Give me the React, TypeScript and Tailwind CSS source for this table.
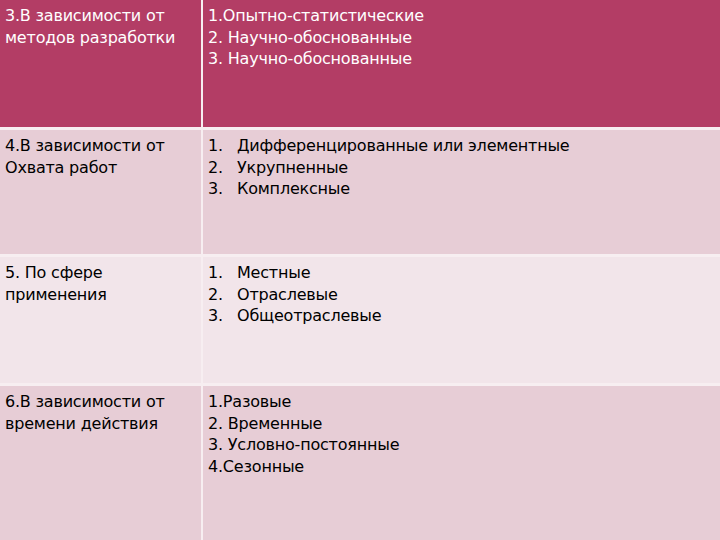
import * as React from "react";

const rows = [
  {
    head: ["3.В зависимости от", "методов разработки"],
    items: ["1.Опытно-статистические", "2. Научно-обоснованные", "3. Научно-обоснованные"],
    list: false,
    bg: "bg-[#b33d65]",
    text: "text-white",
  },
  {
    head: ["4.В зависимости от", "Охвата работ"],
    items: ["Дифференцированные или элементные", "Укрупненные", "Комплексные"],
    list: true,
    bg: "bg-[#e7cdd6]",
    text: "text-black",
  },
  {
    head: ["5. По сфере", "применения"],
    items: ["Местные", "Отраслевые", "Общеотраслевые"],
    list: true,
    bg: "bg-[#f2e5ea]",
    text: "text-black",
  },
  {
    head: ["6.В зависимости от", "времени действия"],
    items: ["1.Разовые", "2. Временные", "3. Условно-постоянные", "4.Сезонные"],
    list: false,
    bg: "bg-[#e7cdd6]",
    text: "text-black",
  },
];

export default function App() {
  return (
    <div
      className="w-[720px] h-[540px] bg-[#f7eef1] grid grid-cols-[201px_1fr] grid-rows-[127px_124px_126px_1fr] gap-x-[2px] gap-y-[3px] overflow-hidden text-[16px] leading-[21.5px]"
      style={{ fontFamily: '"DejaVu Sans", sans-serif' }}
    >
      {rows.map((row, i) => (
        <React.Fragment key={i}>
          <div className={`${row.bg} ${row.text} pl-[5px] pt-[5px] tracking-[-0.2px]`}>
            {row.head.map((line) => (
              <div key={line}>{line}</div>
            ))}
          </div>
          <div className={`${row.bg} ${row.text} pl-[5px] pt-[5px] tracking-[-0.2px]`}>
            {row.list
              ? row.items.map((item, j) => (
                  <div key={item} className="flex">
                    <span className="w-[29px] shrink-0">{j + 1}.</span>
                    <span>{item}</span>
                  </div>
                ))
              : row.items.map((item) => <div key={item}>{item}</div>)}
          </div>
        </React.Fragment>
      ))}
    </div>
  );
}
